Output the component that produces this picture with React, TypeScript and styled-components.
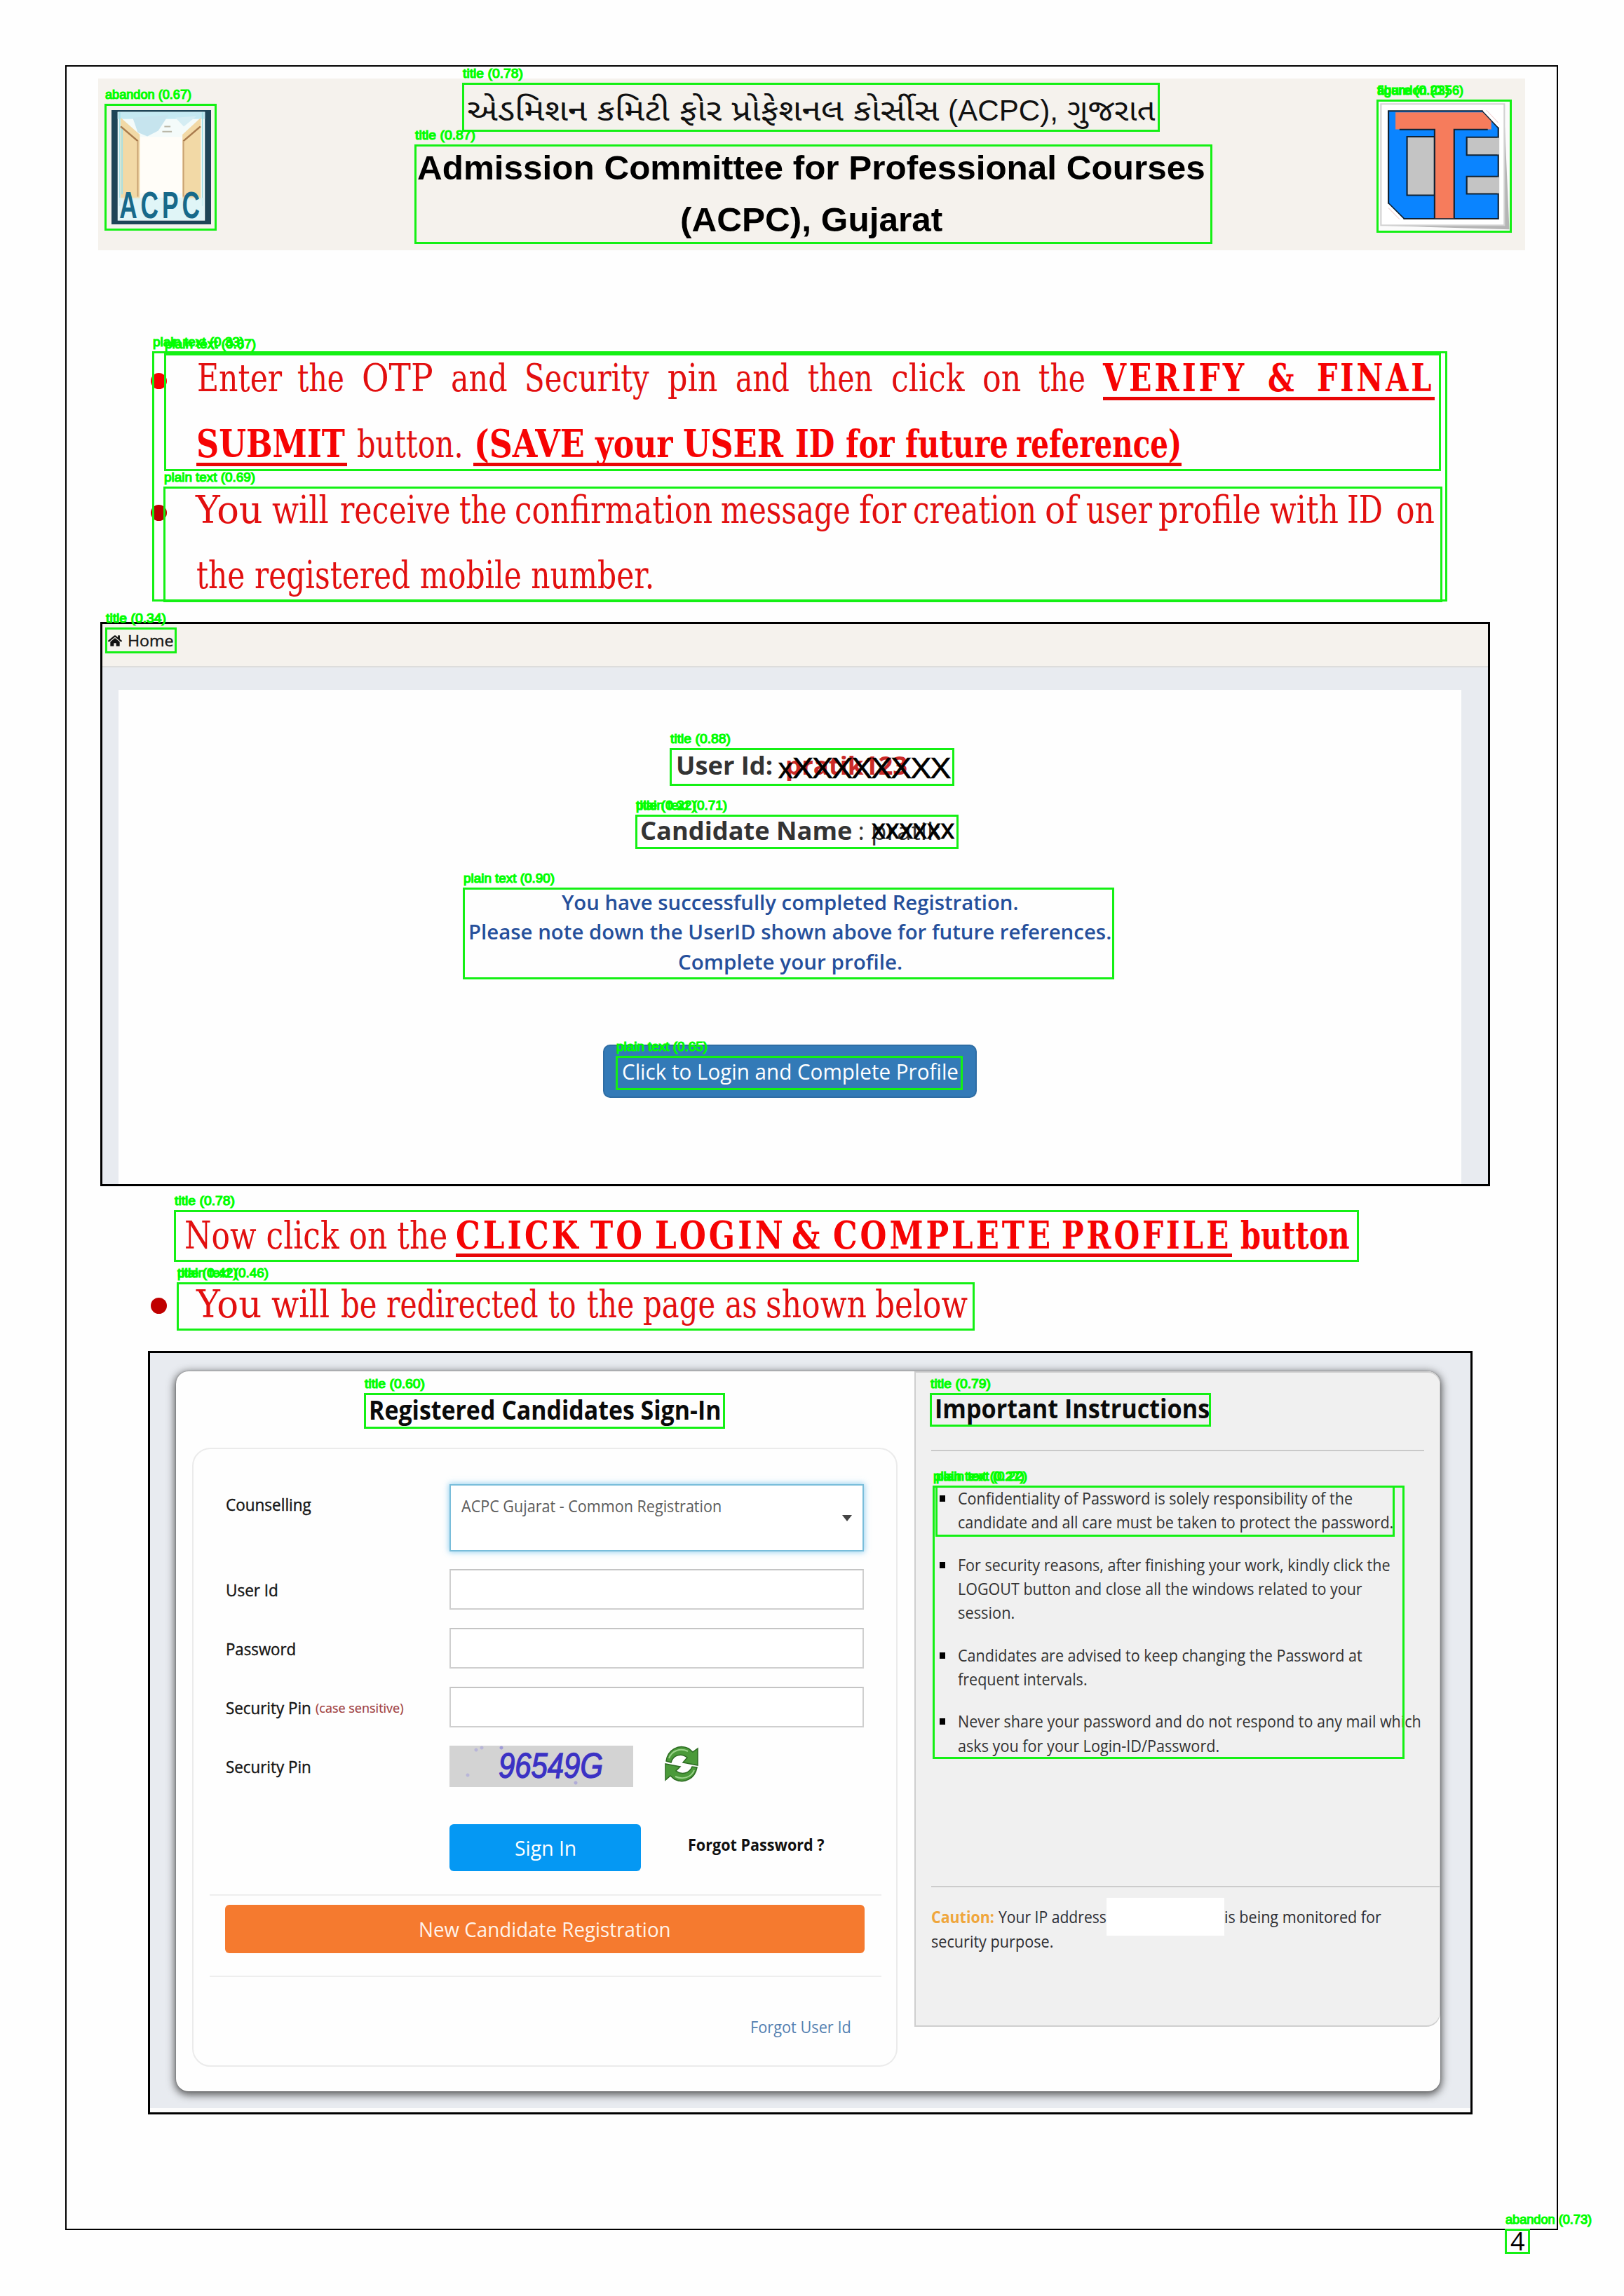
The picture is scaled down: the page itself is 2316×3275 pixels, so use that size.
import React, { useLayoutEffect, useRef, useState } from "react";
import styled, { createGlobalStyle } from "styled-components";
import { FaHome } from "react-icons/fa";

const Global = createGlobalStyle`
  * { box-sizing: border-box; }
  html, body { margin: 0; padding: 0; background: #fefefe; }
`;

/* ---------- fitted text: condenses a run to an exact width ---------- */

const FitBox = styled.span<{ $w: number; $ml: number }>`
  display: inline-block;
  flex: none;
  width: ${(p) => p.$w}px;
  margin-left: ${(p) => p.$ml}px;
  white-space: pre;
  text-align: left;
`;
const FitInner = styled.span`
  display: inline-block;
  transform-origin: 0 50%;
`;

function Fit({ w, ml = 0, children }: { w: number; ml?: number; children: React.ReactNode }) {
  const ref = useRef<HTMLSpanElement>(null);
  const [scale, setScale] = useState(1);
  useLayoutEffect(() => {
    if (ref.current) setScale(w / ref.current.offsetWidth);
  }, [w]);
  return (
    <FitBox $w={w} $ml={ml}>
      <FitInner ref={ref} style={{ transform: `scaleX(${scale})` }}>
        {children}
      </FitInner>
    </FitBox>
  );
}

/* A run of words with the start and end of each along the line. */
type Word = [string, number, number];
function Words({ from, words, tail = 0 }: { from: number; words: Word[]; tail?: number }) {
  return (
    <>
      {words.map(([t, s, e], i) => {
        const prev = i === 0 ? from : words[i - 1][2] + 1 + tail;
        return (
          <Fit key={i} ml={s - 1 - prev} w={e - s + 2 + tail}>
            {t}
          </Fit>
        );
      })}
    </>
  );
}

/* ---------- page ---------- */

const Page = styled.div`
  position: relative;
  width: 2316px;
  height: 3275px;
  padding: 93px 0 0 93px;
  overflow: hidden;
  background: #fefefe;
  font-family: "Open Sans", "Noto Sans", sans-serif;
`;
const Sheet = styled.main`
  width: 2129px;
  height: 3088px;
  border: 2px solid #000;
  display: flex;
  flex-direction: column;
`;
const PageNumber = styled.footer`
  width: 2129px;
  padding-left: 2061px;
  font-size: 36px;
  line-height: 32px;
  color: #000;
`;

/* ---------- banner ---------- */

const Banner = styled.header`
  display: flex;
  flex: none;
  width: 2035px;
  height: 245px;
  margin: 17px 0 0 45px;
  padding-left: 19px;
  background: #f5f2ed;
`;
const AcpcSvg = styled.svg`
  flex: none;
  width: 142px;
  height: 163px;
  margin-top: 45px;
`;
const CteSvg = styled.svg`
  flex: none;
  width: 191px;
  height: 187px;
  margin: 31px 20px 0 0;
`;
const BannerTitles = styled.div`
  flex: 1;
  display: flex;
  flex-direction: column;
  align-items: center;
  padding-left: 49px;
  color: #000;
  font-family: "Liberation Sans", "Noto Sans Gujarati", sans-serif;
`;
const Gujarati = styled.div`
  display: flex;
  font-size: 43px;
  line-height: 90px;
  height: 92px;
  color: #111;
`;
const Headline = styled.div<{ $lh: number }>`
  font-size: 49px;
  font-weight: 700;
  line-height: ${(p) => p.$lh}px;
  height: ${(p) => p.$lh}px;
`;

const AcpcLogo = () => (
  <AcpcSvg viewBox="163 230 292 488" preserveAspectRatio="none">
    <rect x="163" y="230" width="292" height="488" fill="#1f4557" />
    <rect x="181" y="238" width="256" height="464" fill="#f4fbfa" />
    <rect x="181" y="238" width="256" height="30" fill="#c5e9f2" />
    <path d="M225 262 L330 252 L300 318 L268 342 L240 325 Z" fill="#c6e4ee" />
    <path d="M350 262 L412 256 L375 300 Z" fill="#d5edf3" />
    <rect x="244" y="345" width="128" height="240" fill="#fffdf8" />
    <path d="M190 262 L246 335 V612 H190 Z" fill="#f2d9a6" />
    <path d="M425 262 L371 335 V612 H425 Z" fill="#f2d9a6" />
    <path d="M194 300 V590 M187 240 V640" stroke="#a6e0e6" strokeWidth="4" />
    <path d="M430 240 V640" stroke="#a6e0e6" strokeWidth="4" />
    <path d="M190 300 L240 362" fill="none" stroke="#a87a4c" strokeWidth="6" />
    <path d="M424 300 L374 362" fill="none" stroke="#a87a4c" strokeWidth="6" />
    <path d="M240 362 V600 M374 362 V600" fill="none" stroke="#c9a374" strokeWidth="4" />
    <path d="M318 300 H336 M312 322 H340" stroke="#b9b7a8" strokeWidth="6" />
    <rect x="183" y="604" width="252" height="96" fill="#d9f3f6" opacity="0.75" />
    <text
      x="186"
      y="690"
      textLength="246"
      lengthAdjust="spacingAndGlyphs"
      fontFamily="Liberation Sans"
      fontWeight="700"
      fontSize="158"
      letterSpacing="22"
      fill="#17698a"
    >
      ACPC
    </text>
  </AcpcSvg>
);

const CteLogo = () => (
  <CteSvg viewBox="739 190 534 560" preserveAspectRatio="none">
    <rect x="739" y="190" width="534" height="560" fill="#fbfbfb" />
    <path d="M1244 208 L1266 742 L900 730 L750 725 L1244 722 Z" fill="#b5b5b5" />
    <rect x="754" y="206" width="492" height="518" fill="#fff" stroke="#d2d2d2" strokeWidth="6" />
    <path d="M784 236 H1158 L1222 308 V696 H846 L784 630 Z" fill="#0a84ff" stroke="#123" strokeWidth="6" />
    <path d="M858 346 H968 V596 H858 Z" fill="#c4c4c4" stroke="#123" strokeWidth="6" />
    <path d="M1222 348 H1096 V424 H1222" fill="#c4c4c4" stroke="#123" strokeWidth="6" />
    <path d="M1222 516 H1096 V590 H1222" fill="#c4c4c4" stroke="#123" strokeWidth="6" />
    <path d="M1222 351 V421 M1222 519 V587" stroke="#c4c4c4" strokeWidth="8" />
    <path d="M812 242 H1160 L1194 280 V314 H1046 V694 H969 V314 H812 Z" fill="#f67c5c" />
    <path d="M828 315 H968 V694 M1180 315 H1046 V694" fill="none" stroke="#123" strokeWidth="6" />
    <path d="M1164 232 L1226 302 M780 636 L840 700" stroke="#fff" strokeWidth="10" />
    <path d="M1174 232 L1222 286 M784 650 L828 698" stroke="#f3d3d3" strokeWidth="3" />
  </CteSvg>
);

/* ---------- red instructions ---------- */

const Instructions = styled.section<{ $lh: number; $top: number }>`
  flex: none;
  margin: ${(p) => p.$top}px 0 0 120px;
  font-family: "DejaVu Serif", "Liberation Serif", serif;
  font-size: 54.4px;
  line-height: ${(p) => p.$lh}px;
  color: #e20f0f;
`;
const Item = styled.div`
  display: flex;
`;
const Dot = styled.span<{ $c: string }>`
  flex: none;
  width: 23px;
  height: 23px;
  margin: 39px 42px 0 0;
  border-radius: 50%;
  background: ${(p) => p.$c};
`;
const Lines = styled.div``;
const Line = styled.div<{ $lh: number; $indent?: number }>`
  display: flex;
  height: ${(p) => p.$lh}px;
  padding-left: ${(p) => p.$indent ?? 0}px;
`;
const Strong = styled.b<{ $ls?: number; $ml?: number }>`
  font-weight: 700;
  color: #f60303;
  letter-spacing: ${(p) => p.$ls ?? 0}px;
  margin-left: ${(p) => p.$ml ?? 0}px;
`;
const Underlined = styled(Strong)<{ $w: number; $y: number }>`
  display: flex;
  flex: none;
  width: ${(p) => p.$w}px;
  background: linear-gradient(#e80606, #e80606) 0 ${(p) => p.$y}px / 100% 5.4px no-repeat;
`;
const Push = styled.span<{ $x: number }>`
  margin-left: ${(p) => p.$x}px;
`;

/* ---------- first screen capture ---------- */

const ConfirmShot = styled.section`
  flex: none;
  width: 1982px;
  height: 805px;
  margin: 19px 0 0 48px;
  border: 3px solid #000;
  background: #e8ebf0;
  display: flex;
  flex-direction: column;
`;
const HomeBar = styled.nav`
  flex: none;
  display: flex;
  align-items: flex-start;
  height: 62px;
  padding: 7px 0 0 8px;
  background: #f5f2ed;
  border-bottom: 2px solid #dddddc;
  font-size: 22.5px;
  line-height: 34px;
  color: #161616;
  -webkit-text-stroke: 0.4px #161616;
  svg { width: 20px; height: 20px; margin: 7px 8px 0 0; color: #111; }
`;
const ConfirmPanel = styled.div`
  flex: 1;
  margin: 32px 38px 0 23px;
  padding-top: 82px;
  display: flex;
  flex-direction: column;
  align-items: center;
  background: #fefefe;
`;
const Identity = styled.div<{ $pad: number; $h: number }>`
  display: flex;
  width: 1914px;
  height: ${(p) => p.$h}px;
  padding-left: ${(p) => p.$pad}px;
  font-size: 35.5px;
  line-height: 50px;
  color: #333;
  b { font-weight: 700; }
`;
const Masked = styled.span<{ $ml: number }>`
  position: relative;
  display: block;
  margin-left: ${(p) => p.$ml}px;
`;
const RedValue = styled.b`
  color: #cb2a28;
`;
const Strike = styled.span<{ $x: number; $y: number; $size: number; $stroke: number }>`
  position: absolute;
  left: ${(p) => p.$x}px;
  top: ${(p) => p.$y}px;
  display: flex;
  font-family: "Open Sans", sans-serif;
  font-size: ${(p) => p.$size}px;
  font-weight: 400;
  line-height: 50px;
  color: #000;
  -webkit-text-stroke: ${(p) => p.$stroke}px #000;
`;
const BlueNote = styled.p`
  margin: 29px 0 0;
  font-size: 28.6px;
  font-weight: 600;
  line-height: 42.5px;
  color: #254f9b;
  text-align: center;
`;
const NoteLine = styled.span`
  display: block;
  height: 42.5px;
`;
const LoginButton = styled.button`
  width: 533px;
  height: 76px;
  margin: 97px 0 0;
  padding: 0;
  border: 2px solid #2e6da4;
  border-radius: 10px;
  background: #337ab7;
  color: #fff;
  font: 400 31px/70px "Open Sans", sans-serif;
  text-align: center;
`;

/* ---------- second screen capture ---------- */

const SignInShot = styled.section`
  flex: none;
  width: 1889px;
  height: 1089px;
  margin: 17.4px 0 0 116px;
  border: 3px solid #000;
  background: linear-gradient(#e8ebf0, #e8ebf0) 0 0 / 100% 1077px no-repeat, #fcfcfc;
`;
const Card = styled.div`
  display: flex;
  width: 1803px;
  height: 1027px;
  margin: 26px 0 0 37px;
  border-radius: 18px;
  background: #fefefe;
  box-shadow: 0 3px 12px 2px rgba(40, 40, 40, 0.75), 0 0 2px #888;
`;
const FormSide = styled.div`
  width: 1053px;
  padding-left: 23px;
`;
const SectionTitle = styled.h2<{ $indent: number; $h: number; $pt: number }>`
  margin: 0;
  height: ${(p) => p.$h}px;
  padding: ${(p) => p.$pt}px 0 0 ${(p) => p.$indent}px;
  font-size: 37px;
  font-weight: 700;
  line-height: 50px;
  color: #0a0a0a;
`;
const FormPanel = styled.form`
  width: 1006px;
  height: 883px;
  padding: 50px 21px 0 23px;
  border: 2px solid #ebebeb;
  border-radius: 26px;
`;
const Field = styled.div<{ $h: number; $gap: number }>`
  display: flex;
  height: ${(p) => p.$h}px;
  margin-bottom: ${(p) => p.$gap}px;
  padding-left: 23px;
`;
const Label = styled.label<{ $pt: number }>`
  display: flex;
  width: 319px;
  padding-top: ${(p) => p.$pt}px;
  font-size: 24px;
  line-height: 34px;
  color: #141414;
  -webkit-text-stroke: 0.4px #141414;
`;
const Hint = styled.span`
  margin-left: 6px;
  font-size: 18px;
  color: #a0403f;
  -webkit-text-stroke: 0.2px #a0403f;
`;
const Input = styled.div`
  width: 591px;
  height: 100%;
  border: 2px solid #cfcfcf;
  border-top-color: #c4c4c4;
  background: #fff;
`;
const Select = styled.div`
  display: flex;
  justify-content: space-between;
  width: 591px;
  height: 100%;
  padding: 12px 15px 0 15px;
  border: 2px solid #79bdda;
  background: #fff;
  box-shadow: 0 0 8px 1px rgba(102, 190, 233, 0.7);
  font-size: 24px;
  line-height: 34px;
  color: #5c5c5c;
`;
const Caret = styled.i`
  margin-top: 30px;
  width: 0;
  height: 0;
  border: 7.5px solid transparent;
  border-top: 9px solid #444;
  border-bottom: 0;
`;
const Captcha = styled.div`
  width: 262px;
  height: 59px;
  padding-left: 70px;
  background:
    radial-gradient(circle at 38px 6px, #b9b6d8 2px, transparent 3px),
    radial-gradient(circle at 46px 3px, #b9b6d8 2px, transparent 3px),
    radial-gradient(circle at 26px 42px, #b9b6d8 2px, transparent 3px),
    radial-gradient(circle at 74px 3px, #a09bd8 2px, transparent 3px),
    radial-gradient(circle at 180px 53px, #b0acd8 2px, transparent 3px),
    #d3d3d3;
  font: italic 400 50px/58px "Liberation Sans", sans-serif;
  color: #3b32c4;
  -webkit-text-stroke: 1.4px #3b32c4;
`;
const Refresh = styled.svg`
  width: 48px;
  height: 52px;
  margin-left: 45px;
`;
const SignIn = styled.button`
  width: 273px;
  height: 67px;
  margin-left: 319px;
  padding: 0;
  border: 0;
  border-radius: 6px;
  background: #0598f3;
  color: #fff;
  font: 400 30px/64px "Open Sans", sans-serif;
  text-align: center;
`;
const ForgotPassword = styled.b`
  margin-left: 67px;
  font-size: 24px;
  font-weight: 700;
  line-height: 58px;
  color: #111;
`;
const Rule = styled.hr<{ $c: string; $m: string }>`
  height: 2px;
  border: 0;
  margin: ${(p) => p.$m};
  background: ${(p) => p.$c};
`;
const RegisterButton = styled.button`
  display: block;
  width: 912px;
  height: 69px;
  margin-left: 22px;
  padding: 0;
  border: 0;
  border-radius: 6px;
  background: #f57a2f;
  color: #fff3ea;
  font: 400 30px/66px "Open Sans", sans-serif;
  text-align: center;
`;
const ForgotUser = styled.a`
  display: block;
  padding: 54px 0 0 771px;
  font-size: 24px;
  line-height: 34px;
  color: #5480b0;
`;

const InfoSide = styled.aside`
  width: 750px;
  height: 935px;
  padding-left: 22px;
  border: 2px solid #cfcfcf;
  border-right-width: 1px;
  border-radius: 0 18px 20px 0;
  background: #f0f0f0;
`;
const Bullets = styled.ul`
  list-style: none;
  margin: 50px 0 0;
  padding: 0;
  height: 570px;
  font-size: 24px;
  line-height: 34.3px;
  color: #333;
`;
const Bullet = styled.li`
  display: flex;
  margin-bottom: 26.2px;
  &::before {
    content: "";
    flex: none;
    width: 8px;
    height: 9px;
    margin: 13px 18px 0 12px;
    background: #000;
  }
`;
const BulletLine = styled.span`
  display: block;
  height: 34.3px;
`;
const CautionText = styled.p`
  margin: 0;
  padding-top: 24px;
  font-size: 24px;
  line-height: 35px;
  color: #2e2e33;
`;
const CautionRow = styled.span`
  display: flex;
  height: 35px;
`;
const CautionWord = styled.b`
  margin-right: 6px;
  font-weight: 700;
  color: #efa63c;
`;
const Redacted = styled.span`
  flex: none;
  width: 168px;
  height: 54px;
  margin-top: -9px;
  background: #fff;
`;

/* ---------- detection overlay ---------- */

const Overlay = styled.div`
  position: absolute;
  inset: 0;
  font: 400 18px/20px "Liberation Sans", sans-serif;
  color: #00ff00;
  -webkit-text-stroke: 1.2px #00ff00;
`;
const Region = styled.div<{ $x: number; $y: number; $r: number; $b: number }>`
  position: absolute;
  left: ${(p) => p.$x - 1}px;
  top: ${(p) => p.$y - 1}px;
  width: ${(p) => p.$r - p.$x + 3}px;
  height: ${(p) => p.$b - p.$y + 3}px;
  border: 3px solid #14f014;
`;
const Tag = styled.div<{ $x: number; $y: number }>`
  position: absolute;
  left: ${(p) => p.$x}px;
  top: ${(p) => p.$y - 24}px;
`;

type Box = { r: [number, number, number, number]; tags: string[] };
const boxes: Box[] = [
  { r: [150, 149, 307, 327], tags: ["abandon (0.67)"] },
  { r: [660, 119, 1652, 186], tags: ["title (0.78)"] },
  { r: [592, 207, 1727, 346], tags: ["title (0.87)"] },
  { r: [1964, 143, 2154, 330], tags: ["figure (0.23)", "abandon (0.56)"] },
  { r: [218, 502, 2062, 856], tags: ["plain text (0.33)"] },
  { r: [235, 505, 2053, 670], tags: ["plain text (0.67)"] },
  { r: [234, 695, 2055, 857], tags: ["plain text (0.69)"] },
  { r: [151, 896, 250, 930], tags: ["title (0.34)"] },
  { r: [956, 1068, 1359, 1119], tags: ["title (0.88)"] },
  { r: [907, 1163, 1365, 1209], tags: ["title (0.22)", "plain text (0.71)"] },
  { r: [661, 1267, 1587, 1395], tags: ["plain text (0.90)"] },
  { r: [879, 1507, 1371, 1553], tags: ["plain text (0.65)"] },
  { r: [249, 1727, 1936, 1798], tags: ["title (0.78)"] },
  { r: [253, 1830, 1388, 1896], tags: ["title (0.42)", "plain text (0.46)"] },
  { r: [520, 1988, 1032, 2036], tags: ["title (0.60)"] },
  { r: [1327, 1988, 1725, 2033], tags: ["title (0.79)"] },
  { r: [1331, 2120, 2001, 2507], tags: ["plain text (0.27)"] },
  { r: [1335, 2120, 1987, 2190], tags: ["plain text (0.22)"] },
  { r: [2147, 3180, 2180, 3213], tags: ["abandon (0.73)"] },
];
const tagWidth = (t: string) =>
  t.startsWith("plain") ? 130 : t.startsWith("abandon") ? 123 : t.startsWith("figure") ? 103 : 86;

/* ---------- data ---------- */

const enterLine: Word[] = [
  ["Enter", 282.3, 401.7],
  ["the", 425, 489.9],
  ["OTP", 516.8, 616],
  ["and", 643.6, 722],
  ["Security", 749.5, 925.2],
  ["pin", 953.4, 1022.6],
  ["and", 1049.6, 1124.3],
  ["then", 1153.5, 1244],
  ["click", 1271.7, 1374.5],
  ["on", 1402, 1455.4],
  ["the", 1481.7, 1546.6],
];
const verifyLine: Word[] = [
  ["VERIFY", 1574.6, 1773.8],
  ["&", 1808.7, 1844.2],
  ["FINAL", 1879, 2040.2],
];
const saveLine: Word[] = [
  ["(SAVE", 677, 832.8],
  ["your", 850.5, 959],
  ["USER", 974.9, 1115.7],
  ["ID", 1135, 1189.6],
  ["for", 1207.4, 1274.7],
  ["future", 1291.9, 1437],
  ["reference)", 1449.9, 1684.4],
];
const receiveLine: Word[] = [
  ["You", 279.8, 373.5],
  ["will", 388.8, 467.8],
  ["receive", 485.6, 641],
  ["the", 656.4, 722],
  ["confirmation", 735.4, 1015.9],
  ["message", 1029.4, 1212.3],
  ["for", 1225.7, 1291.3],
  ["creation", 1303.5, 1477.4],
  ["of", 1491.5, 1536.8],
  ["user", 1550.3, 1642],
  ["profile", 1653, 1797],
  ["with", 1811.8, 1907.9],
  ["ID", 1922.6, 1971.6],
  ["on", 1991.8, 2045],
];
const clickLine: Word[] = [
  ["CLICK", 651, 824],
  ["TO", 843, 915],
  ["LOGIN", 934.5, 1115],
  ["&", 1129.5, 1168],
  ["COMPLETE", 1189, 1496.8],
  ["PROFILE", 1514.6, 1750.6],
];
const redirectLine: Word[] = [
  ["You", 281.4, 372.6],
  ["will", 388, 469.4],
  ["be", 487, 536.7],
  ["redirected", 552, 766.8],
  ["to", 783, 820.8],
  ["the", 838.4, 903.6],
  ["page", 918.3, 1019.4],
  ["as", 1034.8, 1078.3],
  ["shown", 1093, 1234.7],
  ["below", 1248.8, 1379],
];

const notes: [string, number][][] = [
  [
    ["Confidentiality of Password is solely responsibility of the", 563],
    ["candidate and all care must be taken to protect the password.", 621],
  ],
  [
    ["For security reasons, after finishing your work, kindly click the", 617],
    ["LOGOUT button and close all the windows related to your", 577],
    ["session.", 81],
  ],
  [
    ["Candidates are advised to keep changing the Password at", 577],
    ["frequent intervals.", 185],
  ],
  [
    ["Never share your password and do not respond to any mail which", 661],
    ["asks you for your Login-ID/Password.", 373],
  ],
];

export default function App() {
  return (
    <>
      <Global />
      <Page>
        <Sheet>
          <Banner>
            <AcpcLogo />
            <BannerTitles>
              <Gujarati>
                <Fit w={673}>એડમિશન કમિટી ફોર પ્રોફેશનલ કોર્સીસ</Fit>
                <Fit w={157} ml={13}>(ACPC),</Fit>
                <Fit w={126} ml={13}>ગુજરાત</Fit>
              </Gujarati>
              <Headline $lh={70}>
                <Fit w={1124}>Admission Committee for Professional Courses</Fit>
              </Headline>
              <Headline $lh={78}>
                <Fit w={374}>(ACPC), Gujarat</Fit>
              </Headline>
            </BannerTitles>
            <CteLogo />
          </Banner>

          <Instructions $lh={93.8} $top={136}>
            <Item>
              <Dot $c="#f50000" />
              <Lines>
                <Line $lh={93.8}>
                  <Words from={280} words={enterLine} />
                  <Underlined $w={473} $y={73} $ls={5} $ml={26}>
                    <Words from={1573.6} words={verifyLine} tail={4} />
                  </Underlined>
                </Line>
                <Line $lh={93.8}>
                  <Underlined $w={215} $y={73}>
                    <Fit w={212}>SUBMIT</Fit>
                  </Underlined>
                  <Push $x={14}>
                    <Fit w={152}>button.</Fit>
                  </Push>
                  <Underlined $w={1010} $y={73} $ml={14}>
                    <Words from={675} words={saveLine} />
                  </Underlined>
                </Line>
              </Lines>
            </Item>
            <Item>
              <Dot $c="#b80000" />
              <Lines>
                <Line $lh={93.8}>
                  <Words from={280} words={receiveLine} />
                </Line>
                <Line $lh={93.8}>
                  <Fit w={653}>the registered mobile number.</Fit>
                </Line>
              </Lines>
            </Item>
          </Instructions>

          <ConfirmShot>
            <HomeBar>
              <FaHome />
              <Fit w={66}>Home</Fit>
            </HomeBar>
            <ConfirmPanel>
              <Identity $pad={794} $h={92.5}>
                <b>
                  <Fit w={138}>User Id:</Fit>
                </b>
                <Masked $ml={18}>
                  <RedValue>
                    <Fit w={174}>pratik123</Fit>
                  </RedValue>
                  <Strike $x={-10} $y={3} $size={41} $stroke={0.7}>
                    <Fit w={21}>x</Fit>
                    <Fit w={224}>XXXXXXXX</Fit>
                  </Strike>
                </Masked>
              </Identity>
              <Identity $pad={743} $h={78}>
                <b>
                  <Fit w={302}>Candidate Name</Fit>
                </b>
                <Push $x={9}>
                  <Fit w={9}>:</Fit>
                </Push>
                <Masked $ml={9}>
                  <Fit w={99}>pratik</Fit>
                  <Strike $x={1} $y={-3} $size={38} $stroke={1}>
                    <Fit w={118}>xxxxxx</Fit>
                  </Strike>
                </Masked>
              </Identity>
              <BlueNote>
                <NoteLine>
                  <Fit w={652}>You have successfully completed Registration.</Fit>
                </NoteLine>
                <NoteLine>
                  <Fit w={917}>Please note down the UserID shown above for future references.</Fit>
                </NoteLine>
                <NoteLine>
                  <Fit w={320}>Complete your profile.</Fit>
                </NoteLine>
              </BlueNote>
              <LoginButton>
                <Fit w={480}>Click to Login and Complete Profile</Fit>
              </LoginButton>
            </ConfirmPanel>
          </ConfirmShot>

          <Instructions $lh={97.6} $top={22}>
            <Line $lh={97.6} $indent={48}>
              <Fit w={375}>Now click on the</Fit>
              <Underlined $w={1107} $y={74} $ls={5} $ml={12}>
                <Words from={650} words={clickLine} tail={4} />
              </Underlined>
              <Strong $ml={12}>
                <Fit w={156}>button</Fit>
              </Strong>
            </Line>
            <Item>
              <Dot $c="#c00000" />
              <Words from={280} words={redirectLine} />
            </Item>
          </Instructions>

          <SignInShot>
            <Card>
              <FormSide>
                <SectionTitle $indent={252} $h={109} $pt={30}>
                  <Fit w={502}>Registered Candidates Sign-In</Fit>
                </SectionTitle>
                <FormPanel>
                  <Field $h={96} $gap={25.5}>
                    <Label $pt={12}>
                      <Fit w={122}>Counselling</Fit>
                    </Label>
                    <Select>
                      <Fit w={371}>ACPC Gujarat - Common Registration</Fit>
                      <Caret />
                    </Select>
                  </Field>
                  <Field $h={58} $gap={26}>
                    <Label $pt={13}>
                      <Fit w={75}>User Id</Fit>
                    </Label>
                    <Input />
                  </Field>
                  <Field $h={58} $gap={26}>
                    <Label $pt={13}>
                      <Fit w={100}>Password</Fit>
                    </Label>
                    <Input />
                  </Field>
                  <Field $h={58} $gap={26}>
                    <Label $pt={13}>
                      <Fit w={122}>Security Pin</Fit>
                      <Hint>
                        <Fit w={126}>(case sensitive)</Fit>
                      </Hint>
                    </Label>
                    <Input />
                  </Field>
                  <Field $h={59} $gap={53}>
                    <Label $pt={13}>
                      <Fit w={122}>Security Pin</Fit>
                    </Label>
                    <Captcha>
                      <Fit w={149}>96549G</Fit>
                    </Captcha>
                    <Refresh viewBox="0 0 48 52" preserveAspectRatio="none">
                      <path
                        d="M2 22 C4 6 20 -3 34 4 L40 9 L47 4 V28 L26 24 L32 17 C24 10 12 13 9 24 Z"
                        fill="#4b9a3a"
                        stroke="#2c6b22"
                        strokeWidth="1.5"
                      />
                      <path
                        d="M46 31 C43 47 28 55 14 48 L8 43 L1 49 V26 L22 30 L16 36 C24 42 35 40 39 30 Z"
                        fill="#4b9a3a"
                        stroke="#2c6b22"
                        strokeWidth="1.5"
                      />
                      <path
                        d="M6 18 C10 7 22 3 33 8 M42 35 C38 45 26 49 15 44"
                        fill="none"
                        stroke="#9bd38a"
                        strokeWidth="2"
                      />
                    </Refresh>
                  </Field>
                  <Field $h={67} $gap={0}>
                    <SignIn type="button">
                      <Fit w={88}>Sign In</Fit>
                    </SignIn>
                    <ForgotPassword>
                      <Fit w={195}>Forgot Password ?</Fit>
                    </ForgotPassword>
                  </Field>
                  <Rule $c="#eeeeee" $m="33px 0 13px" />
                  <RegisterButton type="button">
                    <Fit w={360}>New Candidate Registration</Fit>
                  </RegisterButton>
                  <Rule $c="#eeeeee" $m="32px 0 0" />
                  <ForgotUser>
                    <Fit w={144}>Forgot User Id</Fit>
                  </ForgotUser>
                </FormPanel>
              </FormSide>
              <InfoSide>
                <SectionTitle $indent={5} $h={110} $pt={26}>
                  <Fit w={392}>Important Instructions</Fit>
                </SectionTitle>
                <Rule $c="#c9c9c9" $m="0 22px 0 0" />
                <Bullets>
                  {notes.map((lines, i) => (
                    <Bullet key={i}>
                      <div>
                        {lines.map(([t, w]) => (
                          <BulletLine key={t}>
                            <Fit w={w}>{t}</Fit>
                          </BulletLine>
                        ))}
                      </div>
                    </Bullet>
                  ))}
                </Bullets>
                <Rule $c="#cccccc" $m="0" />
                <CautionText>
                  <CautionRow>
                    <CautionWord>
                      <Fit w={90}>Caution:</Fit>
                    </CautionWord>
                    <Fit w={154}>Your IP address</Fit>
                    <Redacted />
                    <Fit w={224}>is being monitored for</Fit>
                  </CautionRow>
                  <CautionRow>
                    <Fit w={174}>security purpose.</Fit>
                  </CautionRow>
                </CautionText>
              </InfoSide>
            </Card>
          </SignInShot>
        </Sheet>
        <PageNumber>4</PageNumber>

        <Overlay>
          {boxes.map((b, i) => (
            <React.Fragment key={i}>
              <Region $x={b.r[0]} $y={b.r[1]} $r={b.r[2]} $b={b.r[3]} />
              {b.tags.map((t) => (
                <Tag key={t} $x={b.r[0]} $y={b.r[1]}>
                  <Fit w={tagWidth(t)}>{t}</Fit>
                </Tag>
              ))}
            </React.Fragment>
          ))}
        </Overlay>
      </Page>
    </>
  );
}
